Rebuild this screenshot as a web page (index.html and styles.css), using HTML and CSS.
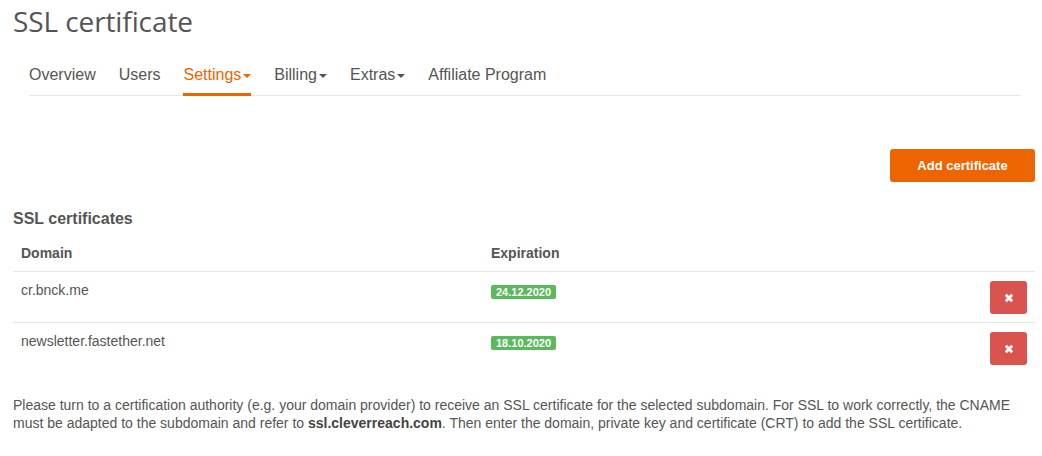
FILE: index.html
```html
<!DOCTYPE html>
<html>
<head>
<meta charset="utf-8">
<link rel="stylesheet" href="styles.css">
</head>
<body>
<div class="page">
  <h1 class="title">SSL certificate</h1>
  <nav class="nav">
    <a class="nav-item">Overview</a>
    <a class="nav-item">Users</a>
    <a class="nav-item active">Settings<span class="caret"></span></a>
    <a class="nav-item">Billing<span class="caret"></span></a>
    <a class="nav-item">Extras<span class="caret"></span></a>
    <a class="nav-item">Affiliate Program</a>
  </nav>
  <div class="actions">
    <button class="btn-primary">Add certificate</button>
  </div>
  <h3 class="section-title">SSL certificates</h3>
  <table class="table">
    <thead>
      <tr><th class="col-domain">Domain</th><th>Expiration</th><th></th></tr>
    </thead>
    <tbody>
      <tr>
        <td>cr.bnck.me</td>
        <td><span class="label">24.12.2020</span></td>
        <td class="cell-action"><button class="btn-danger"><svg width="10" height="10" viewBox="0 0 10 10"><path d="M1.8 1.8L8.2 8.2M8.2 1.8L1.8 8.2" stroke="#fff" stroke-width="2.8"/></svg></button></td>
      </tr>
      <tr>
        <td>newsletter.fastether.net</td>
        <td><span class="label">18.10.2020</span></td>
        <td class="cell-action"><button class="btn-danger"><svg width="10" height="10" viewBox="0 0 10 10"><path d="M1.8 1.8L8.2 8.2M8.2 1.8L1.8 8.2" stroke="#fff" stroke-width="2.8"/></svg></button></td>
      </tr>
    </tbody>
  </table>
  <p class="note">Please turn to a certification authority (e.g. your domain provider) to receive an SSL certificate for the selected subdomain. For SSL to work correctly, the CNAME must be adapted to the subdomain and refer to <b>ssl.cleverreach.com</b>. Then enter the domain, private key and certificate (CRT) to add the SSL certificate.</p>
</div>
</body>
</html>
```
FILE: styles.css
```css
* { box-sizing: border-box; }
body {
  margin: 0;
  background: #fff;
  font-family: "Liberation Sans", Arial, sans-serif;
  color: #555;
}
.page {
  padding: 0 7px 0 13px;
}
.title {
  font-family: "Open Sans", "Noto Sans", sans-serif;
  font-weight: 400;
  font-size: 28px;
  line-height: 36px;
  margin: 3px 0 0 0;
  color: #555;
  letter-spacing: -0.1px;
}
.nav {
  display: flex;
  gap: 23px;
  margin: 19px 15px 0 16px;
  border-bottom: 1px solid #e6e6e6;
  height: 38px;
}
.nav-item {
  font-size: 16px;
  line-height: 20px;
  padding-top: 7px;
  color: #555;
  height: 38px;
  display: flex;
  align-items: flex-start;
  border-bottom: 3px solid transparent;
  margin-bottom: -1px;
}
.nav-item.active {
  color: #ec6500;
  border-bottom-color: #ec6500;
}
.caret {
  display: inline-block;
  width: 0;
  height: 0;
  border-left: 4px solid transparent;
  border-right: 4px solid transparent;
  border-top: 4px solid currentColor;
  margin: 9px 0 0 2px;
}
.actions {
  display: flex;
  justify-content: flex-end;
  margin-top: 53px;
}
.btn-primary {
  background: #ec6500;
  color: #fff;
  border: none;
  border-radius: 3px;
  width: 145px;
  height: 33px;
  font-family: "Liberation Sans", Arial, sans-serif;
  font-weight: 700;
  font-size: 13px;
}
.section-title {
  font-size: 16px;
  font-weight: 700;
  margin: 27px 0 0 0;
  line-height: 20px;
  color: #555;
}
.table {
  width: 100%;
  border-collapse: collapse;
  margin-top: 6px;
  font-size: 14px;
}
.table th {
  text-align: left;
  font-weight: 700;
  padding: 8px;
  line-height: 20px;
  border-bottom: 1px solid #e6e6e6;
}
.col-domain { width: 470px; }
.table td {
  padding: 8px;
  line-height: 20px;
  vertical-align: top;
  border-bottom: 1px solid #e6e6e6;
}
.table tbody tr:last-child td { border-bottom: none; }
.cell-action { text-align: right; }
.label {
  display: inline-block;
  background: #5cb85c;
  color: #fff;
  font-weight: 700;
  font-size: 11px;
  line-height: 11px;
  padding: 2px 5px 1px;
  border-radius: 2px;
  vertical-align: middle;
  margin-top: 1px;
}
.btn-danger {
  background: #d9534f;
  border: none;
  border-radius: 3px;
  width: 37px;
  height: 33px;
  margin-top: 1px;
  display: inline-flex;
  align-items: center;
  justify-content: center;
  padding: 0;
}
.note {
  font-size: 14px;
  line-height: 18px;
  margin: 23px 0 0 0;
  color: #555;
  max-width: 1010px;
}
.note b { color: #444; }
```
